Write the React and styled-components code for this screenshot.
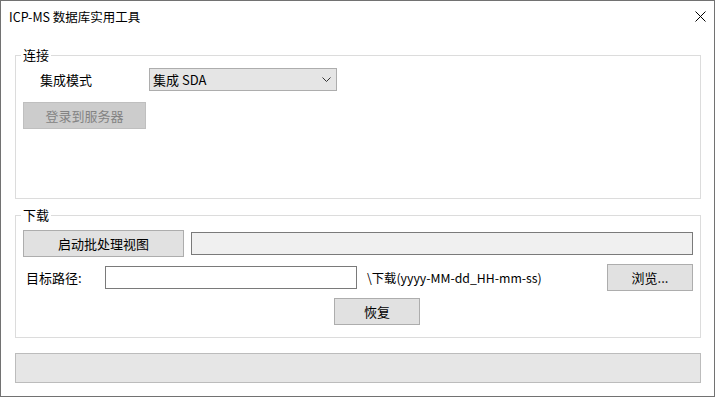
import React from "react";
import styled, { createGlobalStyle } from "styled-components";

const GlobalStyle = createGlobalStyle`
  html, body {
    margin: 0;
    padding: 0;
    background: #ffffff;
  }
  body {
    font-family: "Noto Sans CJK SC", "Noto Sans", sans-serif;
    font-size: 13px;
    color: #000;
  }
  * { box-sizing: border-box; }
`;

const Window = styled.div`
  width: 715px;
  height: 397px;
  border: 1px solid #727272;
  background: #fff;
  display: flex;
  flex-direction: column;
`;

const TitleBar = styled.div`
  height: 31px;
  display: flex;
  align-items: center;
  padding-left: 8px;
  flex-shrink: 0;
`;

const Title = styled.span`
  font-size: 12.5px;
  line-height: 16px;
`;

const CloseButton = styled.div`
  margin-left: auto;
  margin-right: 8px;
  width: 11px;
  height: 11px;
  display: flex;
`;

const Body = styled.div`
  display: flex;
  flex-direction: column;
  padding: 15px 13px 0 14px;
`;

const GroupBox = styled.fieldset`
  margin: 0;
  padding: 0;
  min-width: 0;
  border: 1px solid #dcdcdc;
  height: ${(p) => p.$h}px;
  margin-top: ${(p) => p.$mt || 0}px;
`;

const Legend = styled.legend`
  margin-left: 5px;
  padding: 0 2px;
  font-size: 13px;
  line-height: 16px;
`;

const GroupContent = styled.div`
  display: flex;
  flex-direction: column;
  align-items: flex-start;
  gap: ${(p) => p.$gap}px;
  padding: ${(p) => p.$pt}px 7px 0 7px;
`;

const Row = styled.div`
  display: flex;
  align-items: center;
  align-self: stretch;
  gap: ${(p) => p.$gap || 0}px;
`;

const Label = styled.span`
  width: ${(p) => p.$w}px;
  margin-left: ${(p) => p.$ml || 0}px;
  flex-shrink: 0;
  line-height: 16px;
`;

const Combo = styled.div`
  width: 188px;
  height: 23px;
  border: 1px solid #adadad;
  background: #e5e5e5;
  display: flex;
  align-items: center;
  padding: 0 5px 0 3px;
`;

const ComboText = styled.span`
  flex: 1;
  line-height: 16px;
`;

const Button = styled.button`
  width: ${(p) => p.$w}px;
  height: 27px;
  margin-left: ${(p) => p.$ml || 0}px;
  padding: 0;
  flex-shrink: 0;
  font-family: inherit;
  font-size: 13px;
  line-height: 16px;
  color: #000;
  background: #e1e1e1;
  border: 1px solid #adadad;
  border-radius: 0;
  &:disabled {
    color: #838383;
    background: #cccccc;
    border-color: #bfbfbf;
  }
`;

const ReadOnlyBox = styled.div`
  flex: 1;
  height: 23px;
  background: #f0f0f0;
  border: 1px solid #7a7a7a;
`;

const TextInput = styled.div`
  width: 252px;
  height: 23px;
  background: #fff;
  border: 1px solid #7a7a7a;
  flex-shrink: 0;
`;

const PathText = styled.span`
  margin-left: 10px;
  line-height: 16px;
  font-size: 12.3px;
`;

const BrowseButton = styled(Button)`
  margin-left: auto;
`;

const StatusBar = styled.div`
  margin-top: 15px;
  height: 30px;
  background: #e6e6e6;
  border: 1px solid #bcbcbc;
`;

export default function App() {
  return (
    <>
      <GlobalStyle />
      <Window>
        <TitleBar>
          <Title>ICP-MS 数据库实用工具</Title>
          <CloseButton>
            <svg width="11" height="11" viewBox="0 0 11 11">
              <path d="M0.5 0.5 L10.5 10.5 M10.5 0.5 L0.5 10.5" stroke="#000" strokeWidth="1" fill="none" />
            </svg>
          </CloseButton>
        </TitleBar>
        <Body>
          <GroupBox $h={152}>
            <Legend>连接</Legend>
            <GroupContent $pt={5} $gap={11}>
              <Row>
                <Label $ml={17} $w={109}>集成模式</Label>
                <Combo>
                  <ComboText>集成 SDA</ComboText>
                  <svg width="9" height="5" viewBox="0 0 9 5">
                    <path d="M0.5 0.5 L4.5 4.5 L8.5 0.5" stroke="#333" strokeWidth="1" fill="none" />
                  </svg>
                </Combo>
              </Row>
              <Button $w={123} disabled>登录到服务器</Button>
            </GroupContent>
          </GroupBox>
          <GroupBox $h={131} $mt={8}>
            <Legend>下载</Legend>
            <GroupContent $pt={7} $gap={7}>
              <Row $gap={7}>
                <Button $w={161}>启动批处理视图</Button>
                <ReadOnlyBox />
              </Row>
              <Row>
                <Label $ml={3} $w={79}>目标路径:</Label>
                <TextInput />
                <PathText>\下载(yyyy-MM-dd_HH-mm-ss)</PathText>
                <BrowseButton $w={86}>浏览...</BrowseButton>
              </Row>
              <Button $w={86} $ml={311}>恢复</Button>
            </GroupContent>
          </GroupBox>
          <StatusBar />
        </Body>
      </Window>
    </>
  );
}
